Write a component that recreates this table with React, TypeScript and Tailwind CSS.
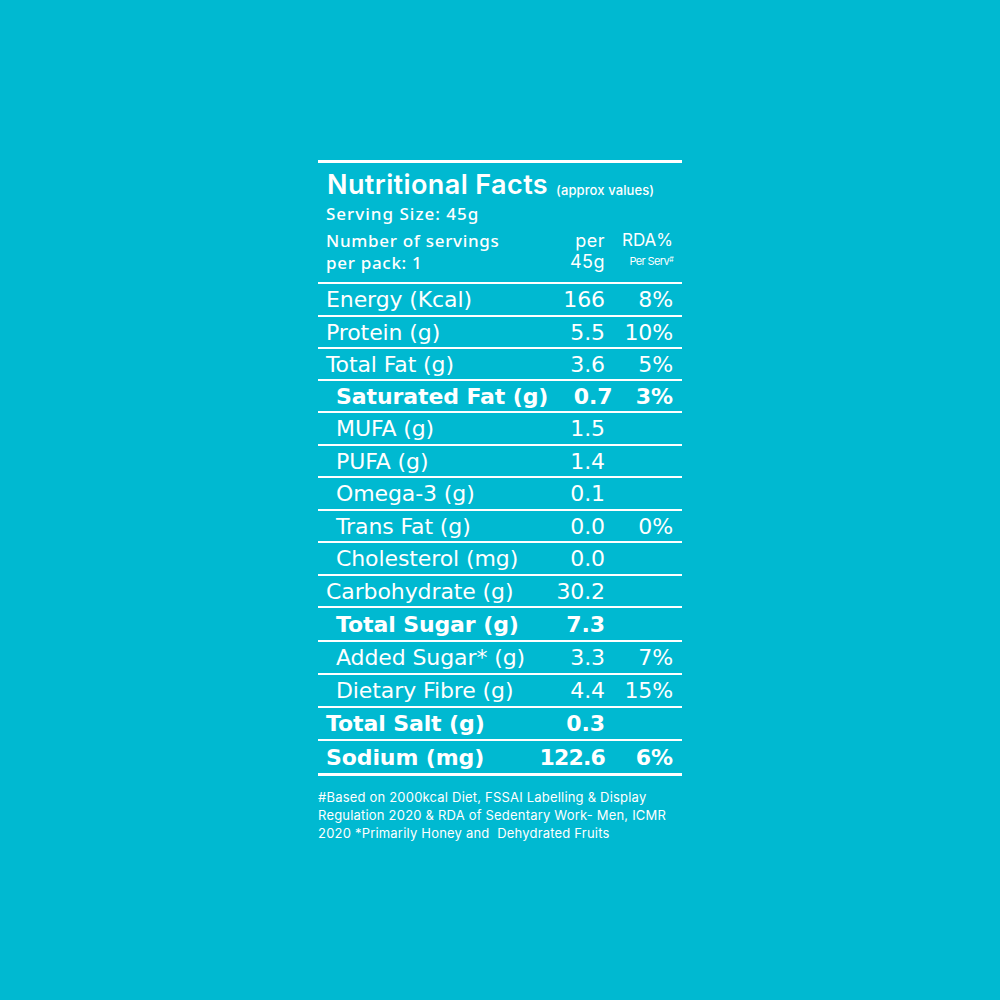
import React from "react";

type Row = { label: string; val: string; rda: string; indent?: boolean; bold?: boolean; h: number; big?: boolean };

const rows: Row[] = [
  { label: "Energy (Kcal)", val: "166", rda: "8%", h: 33 },
  { label: "Protein (g)", val: "5.5", rda: "10%", h: 32 },
  { label: "Total Fat (g)", val: "3.6", rda: "5%", h: 32 },
  { label: "Saturated Fat (g)", val: "0.7", rda: "3%", indent: true, bold: true, h: 32 },
  { label: "MUFA (g)", val: "1.5", rda: "", indent: true, h: 33 },
  { label: "PUFA (g)", val: "1.4", rda: "", indent: true, h: 32 },
  { label: "Omega-3 (g)", val: "0.1", rda: "", indent: true, h: 33 },
  { label: "Trans Fat (g)", val: "0.0", rda: "0%", indent: true, h: 32 },
  { label: "Cholesterol (mg)", val: "0.0", rda: "", indent: true, h: 33 },
  { label: "Carbohydrate (g)", val: "30.2", rda: "", h: 32 },
  { label: "Total Sugar (g)", val: "7.3", rda: "", indent: true, bold: true, h: 34 },
  { label: "Added Sugar* (g)", val: "3.3", rda: "7%", indent: true, h: 33 },
  { label: "Dietary Fibre (g)", val: "4.4", rda: "15%", indent: true, h: 33 },
  { label: "Total Salt (g)", val: "0.3", rda: "", bold: true, h: 33 },
  { label: "Sodium (mg)", val: "122.6", rda: "6%", bold: true, big: true, h: 35 },
];

const heightClass: Record<number, string> = {
  32: "h-[32px]",
  33: "h-[33px]",
  34: "h-[34px]",
  35: "h-[35px]",
};

export default function App() {
  return (
    <div className="w-[1000px] h-[1000px] bg-[#00b9d1] text-white flex justify-center pt-[160px]" style={{ fontFamily: "Inter, 'Noto Sans', sans-serif" }}>
      <div className="w-[364px]">
        <div className="h-[3px] bg-white" />
        <div className="h-[37px] flex items-end pl-[9px] pb-[0px]">
          <span className="text-[27px] leading-[30px] font-semibold tracking-[0.4px]">Nutritional Facts</span>
          <span className="text-[13px] leading-[20px] ml-[8px] font-medium tracking-[0.1px]">(approx values)</span>
        </div>
        <div className="h-[28px] flex items-center pl-[8px] text-[17px] font-medium tracking-[1px]" style={{ fontFamily: "'Noto Sans', sans-serif" }}>
          Serving Size: 45g
        </div>
        <div className="h-[54px] flex pl-[8px] pt-[2px]" style={{ fontFamily: "'Noto Sans', sans-serif" }}>
          <div className="flex-1 text-[17px] leading-[22px] font-medium tracking-[0.7px]">
            <div>Number of servings</div>
            <div>per pack: 1</div>
          </div>
          <div className="w-[60px] text-right text-[18px] leading-[21px] tracking-[0.5px]" style={{ fontFamily: "Inter, sans-serif" }}>
            <div>per</div>
            <div>45g</div>
          </div>
          <div className="w-[77px] text-right pr-[9px] leading-[21px]" style={{ fontFamily: "Inter, sans-serif" }}>
            <div className="text-[17px]">RDA%</div>
            <div className="text-[11px] tracking-[-0.6px]">Per Serv<sup className="text-[7px]">#</sup></div>
          </div>
        </div>
        <div className="h-[2px] bg-white" />
        {rows.map((r, i) => (
          <div
            key={i}
            className={`${heightClass[r.h]} flex items-center ${i === rows.length - 1 ? "border-b-[3px]" : "border-b-2"} border-white ${r.bold ? "font-bold" : "font-normal"} text-[22px] tracking-[-0.1px]`}
            style={{ fontFamily: "'DejaVu Sans', sans-serif" }}
          >
            <div className={`flex-1 whitespace-nowrap ${r.indent ? "pl-[18px]" : "pl-[8px]"}`}>{r.label}</div>
            <div className={`w-[72px] text-right whitespace-nowrap ${r.big ? "tracking-[-0.8px]" : ""}`}>{r.val}</div>
            <div className="w-[77px] text-right pr-[9px]">{r.rda}</div>
          </div>
        ))}
        <div className="mt-[12px] text-[13px] leading-[18px] tracking-[0.2px]">
          <div>#Based on 2000kcal Diet, FSSAI Labelling &amp; Display</div>
          <div>Regulation 2020 &amp; RDA of Sedentary Work- Men, ICMR</div>
          <div>2020 *Primarily Honey and&nbsp; Dehydrated Fruits</div>
        </div>
      </div>
    </div>
  );
}
